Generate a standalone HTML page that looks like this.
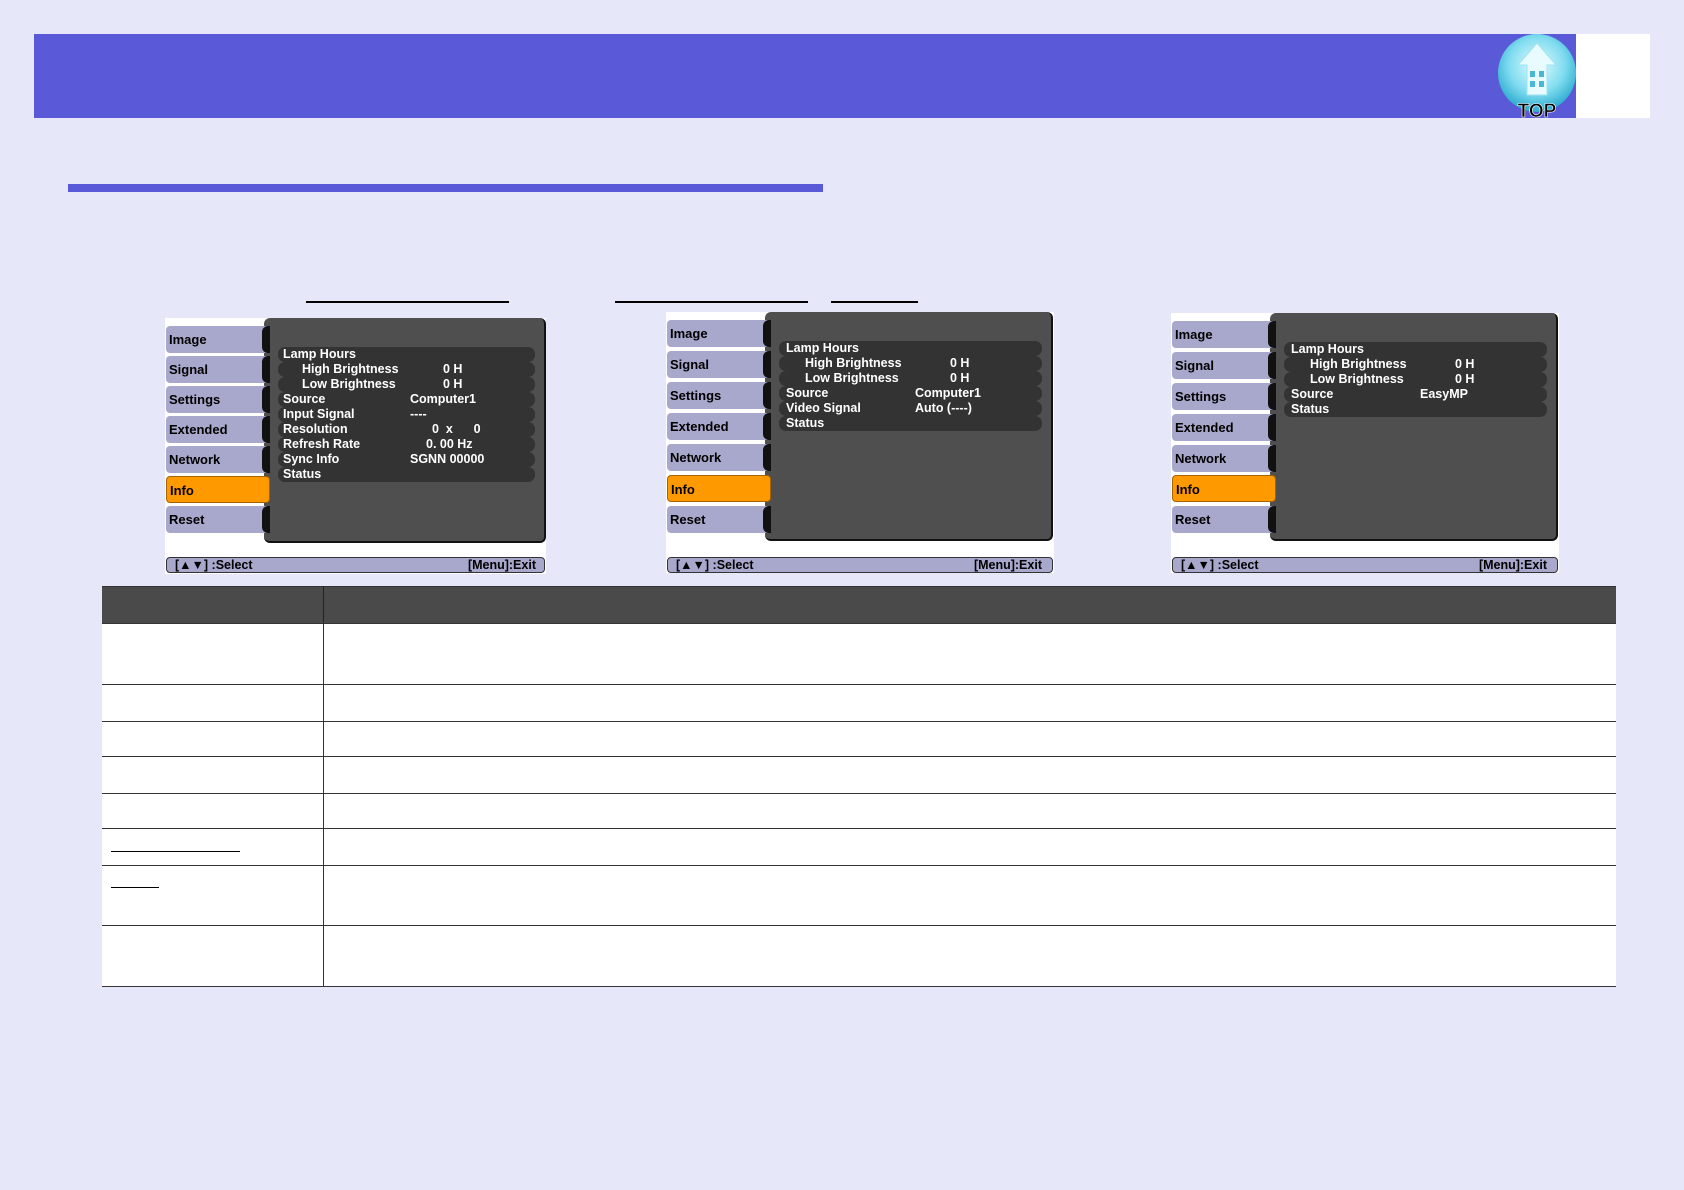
<!DOCTYPE html>
<html><head><meta charset="utf-8"><style>
*{margin:0;padding:0;box-sizing:border-box}
body{width:1684px;height:1190px;background:#e6e8fa;position:relative;overflow:hidden;font-family:"Liberation Sans",sans-serif}
.a{position:absolute}
.menu{position:absolute;width:388px;height:261px;background:#fff}
.panel{position:absolute;left:99px;top:0;width:288px;background:#4f4f4f;border-radius:6px;border-right:2px solid #111;border-bottom:2px solid #111}
.tab{position:absolute;left:1px;width:104px;height:27px;background:#a8a8cc;border-radius:4px;color:#000;font-size:13px;font-weight:bold;line-height:27px;padding-left:3px}
.tab:after{content:"";position:absolute;right:0;top:0;width:8px;height:27px;background:#111;border-radius:6px 0 0 6px}
.tab.on{background:#ff9900;width:104px;border:1px solid #a86200}
.tab.on:after{display:none}
.list{position:absolute;left:113px;top:29px;width:263px}
.row{height:15px;background:#333;border-radius:7px;margin-bottom:0;color:#fff;font-size:12.5px;font-weight:bold;line-height:15px;position:relative}
.row span{position:absolute;top:0}
.foot{position:absolute;left:1px;top:245px;width:386px;height:16px;background:#a8a8cc;border:1px solid #333;border-radius:4px;font-size:12.5px;font-weight:bold;line-height:14px;color:#000}
.line{position:absolute;height:2px;background:#000}
table{position:absolute;left:102px;top:586px;width:1514px;border-collapse:collapse}
td{border-top:1px solid #333;border-bottom:1px solid #333;background:#fff}
td.l{width:221px;border-right:1px solid #333}
</style></head><body>
<div class="a" style="left:34px;top:34px;width:1542px;height:84px;background:#5a5ad8"></div>
<div class="a" style="left:1576px;top:34px;width:74px;height:84px;background:#fff"></div>
<svg class="a" style="left:1496px;top:33px" width="82" height="88" viewBox="0 0 82 88">
<defs><radialGradient id="g" cx="50%" cy="40%" r="60%"><stop offset="0" stop-color="#e6fbff"/><stop offset="0.6" stop-color="#7fdcef"/><stop offset="1" stop-color="#2aa9cf"/></radialGradient></defs>
<circle cx="41" cy="40" r="39" fill="url(#g)"/>
<path d="M41 10 L60 32 L51 32 L51 62 L31 62 L31 32 L22 32 Z" fill="#e8fbff" stroke="#9fe3f2"/>
<rect x="34" y="38" width="5" height="6" fill="#49b8d6"/><rect x="43" y="38" width="5" height="6" fill="#49b8d6"/>
<rect x="34" y="48" width="5" height="6" fill="#49b8d6"/><rect x="43" y="48" width="5" height="6" fill="#49b8d6"/>
<text x="41" y="84" text-anchor="middle" font-family="Liberation Sans" font-weight="bold" font-size="19" fill="#000" stroke="#fff" stroke-width="0.6">TOP</text>
</svg>
<div class="a" style="left:68px;top:184px;width:755px;height:8px;background:#5a5ad8"></div>
<div class="line" style="left:306px;top:301px;width:203px"></div>
<div class="line" style="left:615px;top:301px;width:193px"></div>
<div class="line" style="left:831px;top:301px;width:87px"></div>

<!-- Menu 1 -->
<div class="menu" style="left:165px;top:318px;width:381px;height:256px">
<div class="panel" style="height:225px;width:282px"></div>
<div class="tab" style="top:8px">Image</div><div class="tab" style="top:38px">Signal</div><div class="tab" style="top:68px">Settings</div><div class="tab" style="top:98px">Extended</div><div class="tab" style="top:128px">Network</div><div class="tab on" style="top:158px">Info</div><div class="tab" style="top:188px">Reset</div>
<div class="list" style="width:257px">
<div class="row"><span style="left:5px">Lamp Hours</span></div>
<div class="row"><span style="left:24px">High Brightness</span><span style="left:165px">0 H</span></div>
<div class="row"><span style="left:24px">Low Brightness</span><span style="left:165px">0 H</span></div>
<div class="row"><span style="left:5px">Source</span><span style="left:132px">Computer1</span></div>
<div class="row"><span style="left:5px">Input Signal</span><span style="left:132px">----</span></div>
<div class="row"><span style="left:5px">Resolution</span><span style="left:154px">0 &nbsp;x &nbsp; &nbsp; &nbsp;0</span></div>
<div class="row"><span style="left:5px">Refresh Rate</span><span style="left:148px">0. 00 Hz</span></div>
<div class="row"><span style="left:5px">Sync Info</span><span style="left:132px">SGNN 00000</span></div>
<div class="row"><span style="left:5px">Status</span></div>
</div>
<div class="foot" style="top:239px;width:379px"><span style="position:absolute;left:8px">[&#9650;&#9660;] :Select</span><span style="position:absolute;right:8px">[Menu]:Exit</span></div>
</div>

<!-- Menu 2 -->
<div class="menu" style="left:666px;top:312px;width:388px;height:261px">
<div class="panel" style="height:229px"></div>
<div class="tab" style="top:8px">Image</div><div class="tab" style="top:39px">Signal</div><div class="tab" style="top:70px">Settings</div><div class="tab" style="top:101px">Extended</div><div class="tab" style="top:132px">Network</div><div class="tab on" style="top:163px">Info</div><div class="tab" style="top:194px">Reset</div>
<div class="list">
<div class="row"><span style="left:7px">Lamp Hours</span></div>
<div class="row"><span style="left:26px">High Brightness</span><span style="left:171px">0 H</span></div>
<div class="row"><span style="left:26px">Low Brightness</span><span style="left:171px">0 H</span></div>
<div class="row"><span style="left:7px">Source</span><span style="left:136px">Computer1</span></div>
<div class="row"><span style="left:7px">Video Signal</span><span style="left:136px">Auto (----)</span></div>
<div class="row"><span style="left:7px">Status</span></div>
</div>
<div class="foot"><span style="position:absolute;left:8px">[&#9650;&#9660;] :Select</span><span style="position:absolute;right:10px">[Menu]:Exit</span></div>
</div>

<!-- Menu 3 -->
<div class="menu" style="left:1171px;top:313px;width:388px;height:260px">
<div class="panel" style="height:228px"></div>
<div class="tab" style="top:8px">Image</div><div class="tab" style="top:39px">Signal</div><div class="tab" style="top:70px">Settings</div><div class="tab" style="top:101px">Extended</div><div class="tab" style="top:132px">Network</div><div class="tab on" style="top:162px">Info</div><div class="tab" style="top:193px">Reset</div>
<div class="list">
<div class="row"><span style="left:7px">Lamp Hours</span></div>
<div class="row"><span style="left:26px">High Brightness</span><span style="left:171px">0 H</span></div>
<div class="row"><span style="left:26px">Low Brightness</span><span style="left:171px">0 H</span></div>
<div class="row"><span style="left:7px">Source</span><span style="left:136px">EasyMP</span></div>
<div class="row"><span style="left:7px">Status</span></div>
</div>
<div class="foot" style="top:244px"><span style="position:absolute;left:8px">[&#9650;&#9660;] :Select</span><span style="position:absolute;right:10px">[Menu]:Exit</span></div>
</div>

<table>
<tr style="height:37px"><td class="l" style="background:#4a4a4a;border-right-color:#222"></td><td style="background:#4a4a4a"></td></tr>
<tr style="height:61px"><td class="l"></td><td></td></tr>
<tr style="height:37px"><td class="l"></td><td></td></tr>
<tr style="height:35px"><td class="l"></td><td></td></tr>
<tr style="height:37px"><td class="l"></td><td></td></tr>
<tr style="height:35px"><td class="l"></td><td></td></tr>
<tr style="height:37px"><td class="l"></td><td></td></tr>
<tr style="height:60px"><td class="l"></td><td></td></tr>
<tr style="height:61px"><td class="l"></td><td></td></tr>
</table>
<div class="a" style="left:111px;top:851px;width:129px;height:1px;background:#000"></div>
<div class="a" style="left:111px;top:887px;width:48px;height:1px;background:#000"></div>
</body></html>
